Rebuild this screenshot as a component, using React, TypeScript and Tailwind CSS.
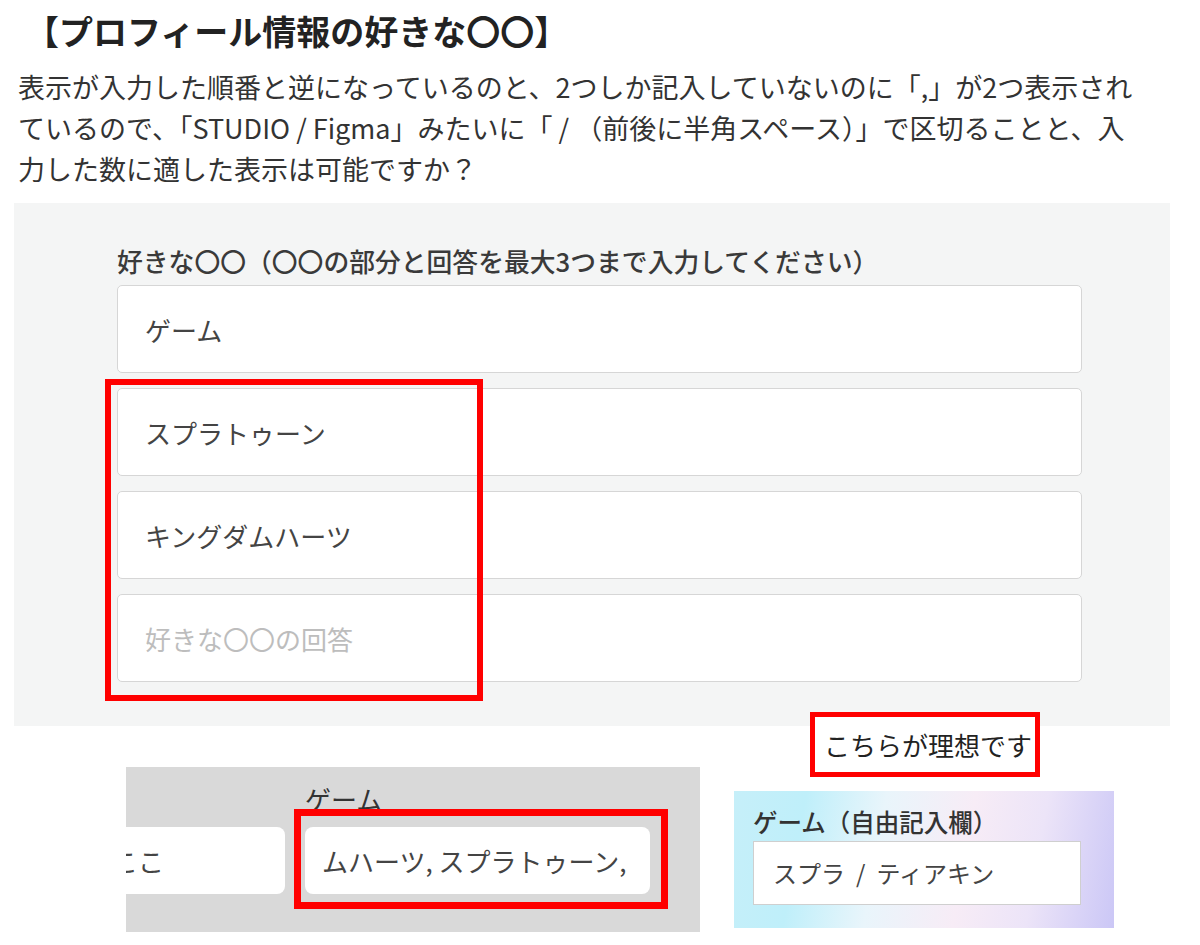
import React from "react";

const Field = ({ children, placeholder }: { children: React.ReactNode; placeholder?: boolean }) => (
  <div
    className={`h-[88px] w-[965px] rounded-[5px] border border-[#d6d6d6] bg-white flex items-center pl-[27px] text-[26px] ${
      placeholder ? "text-[#bdbdbd]" : "text-[#444]"
    }`}
  >
    {children}
  </div>
);

export default function App() {
  return (
    <div className="relative w-[1200px] h-[945px] overflow-hidden bg-white font-['Noto_Sans_CJK_JP','Noto_Sans',sans-serif] text-[#222]">
      <div className="pl-[16px] pt-[7px]">
        <h1 className="pl-[9px] text-[34px] font-bold leading-[48px] text-[#222]">【プロフィール情報の好きな〇〇】</h1>
        <div className="mt-[11px] pl-[2px] text-[27px] leading-[41px] text-[#333] whitespace-nowrap">
          <div>表示が入力した順番と逆になっているのと、2つしか記入していないのに「,」が2つ表示され</div>
          <div>ているので、「STUDIO / Figma」みたいに「 / （前後に半角スペース）」で区切ることと、入</div>
          <div>力した数に適した表示は可能ですか？</div>
        </div>
      </div>

      <div className="relative ml-[14px] mt-[14px] h-[523px] w-[1156px] bg-[#f4f5f5] pl-[103px] pt-[42px]">
        <div className="text-[25.8px] leading-[32px] font-medium text-[#3a3a3a] whitespace-nowrap">
          好きな〇〇（〇〇の部分と回答を最大3つまで入力してください）
        </div>
        <div className="mt-[8px] flex flex-col gap-[15px]">
          <Field>ゲーム</Field>
          <Field>スプラトゥーン</Field>
          <Field>キングダムハーツ</Field>
          <Field placeholder>好きな〇〇の回答</Field>
        </div>
        <div className="absolute left-[91px] top-[176px] h-[322px] w-[378px] border-[6px] border-[#ff0000]" />
      </div>

      <div className="relative h-[218px]">
        <div className="absolute left-[810px] top-[-14px] flex h-[65px] w-[230px] items-center border-[5px] border-[#ff0000] bg-white pl-[9px] text-[26px] text-[#222] whitespace-nowrap">
          こちらが理想です
        </div>

        <div className="flex items-start">
          <div className="relative ml-[126px] mt-[41px] flex h-[165px] w-[574px] gap-[20px] overflow-hidden bg-[#d9d9d9]">
            <div className="mt-[60px] flex h-[67px] w-[159px] shrink-0 items-center overflow-hidden rounded-r-[8px] bg-white text-[26px] text-[#444]">
              <span className="ml-[-14px] whitespace-nowrap">ここ</span>
            </div>
            <div className="w-[345px] shrink-0">
              <div className="mt-[17px] text-[26px] leading-[30px] text-[#333]">ゲーム</div>
              <div className="mt-[13px] flex h-[67px] items-center rounded-[8px] bg-white pl-[17px] text-[26px] text-[#444] whitespace-nowrap">
                ムハーツ, スプラトゥーン,
              </div>
            </div>
            <div className="absolute left-[168px] top-[42px] h-[100px] w-[374px] border-[7px] border-[#ff0000]" />
          </div>

          <div className="ml-[34px] mt-[65px] h-[137px] w-[380px] bg-[linear-gradient(100deg,#c6eff9_0%,#bfeffa_18%,#e9f5fb_38%,#f7ecf6_60%,#ece4f8_78%,#cbc7f6_100%)] pl-[19px] pt-[16px]">
            <div className="text-[24.5px] leading-[30px] font-medium text-[#333] whitespace-nowrap">ゲーム（自由記入欄）</div>
            <div className="mt-[4px] flex h-[64px] w-[328px] items-center border border-[#cfcfcf] bg-white pl-[19px] text-[24px] text-[#444] whitespace-nowrap">
              スプラ<span className="mx-[11px]">/</span>ティアキン
            </div>
          </div>
        </div>
      </div>
    </div>
  );
}
